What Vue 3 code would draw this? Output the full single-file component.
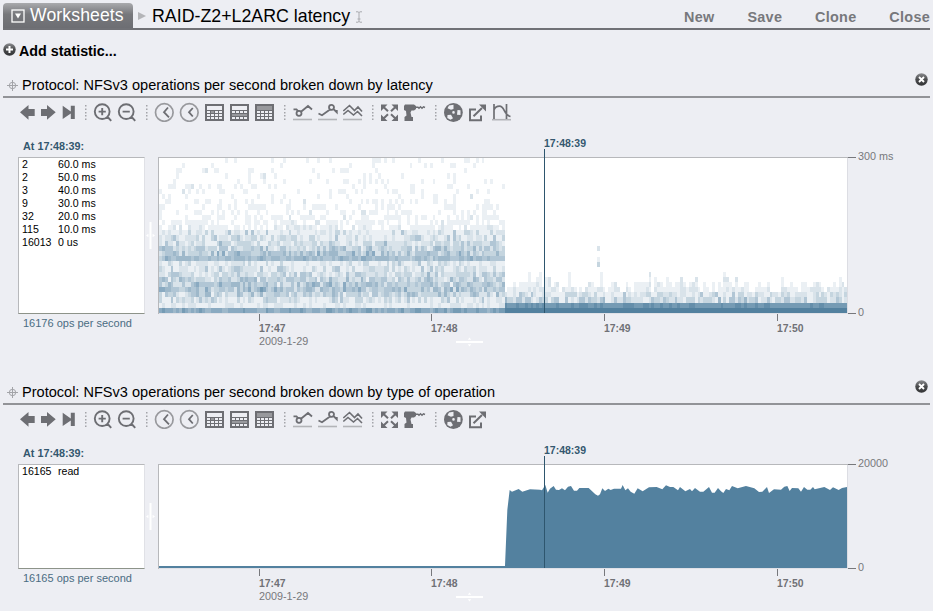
<template>
  <main class="analytics">
    <header class="topbar">
      <button class="worksheets">
        <svg width="14" height="14" viewBox="0 0 14 14">
          <rect x="1" y="1" width="12" height="12" fill="none" stroke="#fff" stroke-width="1.3" />
          <path d="M4 4.5H10L7 9.5Z" fill="#fff" />
        </svg>
        <span>Worksheets</span>
      </button>
      <svg class="crumb" width="8" height="8" viewBox="0 0 8 8">
        <path d="M0 0L8 4 0 8Z" fill="#b4b5b8" />
      </svg>
      <h1>RAID-Z2+L2ARC latency</h1>
      <svg class="caret" width="8" height="12" viewBox="0 0 8 12">
        <path d="M1 .8H3L4 1.6 5 .8H7M4 1.6V10.4M1 11.2H3L4 10.4 5 11.2H7M2.5 8H5.5" fill="none" stroke="#a9aaae" />
      </svg>
      <nav>
        <a v-for="item in menu" :key="item">{{ item }}</a>
      </nav>
    </header>

    <div class="add-row">
      <svg width="13" height="13" viewBox="0 0 13 13">
        <circle cx="6.5" cy="6.5" r="6.2" fill="url(#knob)" />
        <path d="M6.5 3V10M3 6.5H10" stroke="#fff" stroke-width="2" />
      </svg>
      <span>Add statistic...</span>
    </div>

    <section v-for="panel in panels" :key="panel.title" class="panel">
      <div class="panel-head">
        <svg class="move" width="11" height="11" viewBox="0 0 11 11" fill="none" stroke="#a3a4a8">
          <circle cx="5.5" cy="5.5" r="3.2" />
          <path d="M5.5 0V11M0 5.5H11" />
        </svg>
        <h2>{{ panel.title }}</h2>
        <svg class="close" width="13" height="13" viewBox="0 0 13 13">
          <circle cx="6.5" cy="6.5" r="6.2" fill="url(#knob)" />
          <path d="M4 4L9 9M9 4L4 9" stroke="#fff" stroke-width="1.9" />
        </svg>
      </div>

      <div class="toolbar">
        <svg
          v-for="tool in panel.tools"
          :key="tool.x"
          :width="tool.w"
          height="20"
          :viewBox="`${tool.x} 0 ${tool.w} 20`"
        >
          <path v-if="tool.fill" :d="tool.fill" fill="#6d6e73" />
          <path v-if="tool.base" :d="tool.base" fill="none" stroke="#b3b4b8" stroke-width="1.6" />
          <path v-if="tool.soft" :d="tool.soft" fill="none" stroke="#98999d" stroke-width="1.7" />
          <path v-if="tool.line" :d="tool.line" fill="none" stroke="#6d6e73" :stroke-width="tool.sw || 1.8" />
          <path v-if="tool.light" :d="tool.light" fill="#edeef3" />
          <path v-if="tool.dots" :d="tool.dots" fill="#a3a4a9" />
          <path v-if="tool.grey" :d="tool.grey" fill="#98999d" />
        </svg>
      </div>

      <div class="body">
        <aside>
          <h3>At 17:48:39:</h3>
          <ul :class="panel.kind">
            <li v-for="row in panel.rows" :key="row[1]">
              <span>{{ row[0] }}</span>
              <span>{{ row[1] }}</span>
            </li>
          </ul>
          <p>{{ panel.total }} ops per second</p>
        </aside>

        <div class="splitter" :class="panel.kind">
          <svg width="9" height="27" viewBox="0 0 9 27">
            <path d="M3.5 0H5.5V27H3.5ZM0 13.5L2.4 11.8V15.2ZM9 13.5L6.6 11.8V15.2Z" fill="#fff" />
          </svg>
        </div>

        <svg
          class="plot"
          width="775"
          :height="panel.h + 60"
          :viewBox="`158 -22 775 ${panel.h + 60}`"
        >
          <rect x="158" y="0" width="690" :height="panel.h" fill="#fff" />
          <g v-if="panel.kind === 'heat'" shape-rendering="crispEdges">
            <rect
              v-for="(c, i) in cells"
              :key="i"
              :x="c.x"
              :y="c.y"
              :width="c.w"
              :height="c.h"
              :fill="c.fill"
            />
          </g>
          <polygon v-else :points="area" transform="translate(158 0) scale(.33333)" fill="#53819f" />
          <g shape-rendering="crispEdges">
            <rect x="847" y="0" width="1" :height="panel.h" fill="#dcdde3" />
            <rect x="158" :y="panel.h - 1" width="690" height="1" fill="#e0e1e7" />
            <rect x="158" y="0" width="690" height="1" fill="#b7b8bb" />
            <rect x="158" y="0" width="1" :height="panel.h" fill="#b7b8bb" />
            <rect x="848" y="0" width="8" height="1" fill="#77787c" />
            <rect x="848" :y="panel.h - 1" width="8" height="1" fill="#77787c" />
            <rect v-for="t in ticks" :key="t.x" :x="t.x" :y="panel.h" width="1" height="7" fill="#77787c" />
            <rect x="544" y="-8" width="1" :height="panel.h + 7" fill="#2e566e" />
          </g>
          <text x="544" y="-10" class="marker">17:48:39</text>
          <text v-for="t in ticks" :key="t.label" :x="t.x" :y="panel.h + 18" class="tick">{{ t.label }}</text>
          <text x="259" :y="panel.h + 31" class="date">2009-1-29</text>
          <text x="858" y="3" class="axis">{{ panel.max }}</text>
          <text x="858" :y="panel.h + 2" class="axis">0</text>
          <g :transform="`translate(456 ${panel.h + 22})`" fill="#fff">
            <path d="M0 5H27V7H0ZM13.5 1.5L15.2 3.8H11.8ZM13.5 10.5L15.2 8.2H11.8Z" />
          </g>
        </svg>
      </div>
    </section>

    <svg class="defs" width="0" height="0">
      <defs>
        <linearGradient id="knob" x1="0" y1="0" x2="0" y2="1">
          <stop offset="0" stop-color="#8b8c8f" />
          <stop offset=".5" stop-color="#4a4b4d" />
          <stop offset="1" stop-color="#333436" />
        </linearGradient>
      </defs>
    </svg>
  </main>
</template>

<script setup>
const menu = ["New", "Save", "Clone", "Close"];

const ticks = [
  { x: 259, label: "17:47" },
  { x: 431, label: "17:48" },
  { x: 604, label: "17:49" },
  { x: 777, label: "17:50" },
];

const circle = (cx, cy, r) =>
  `M${cx - r} ${cy}a${r} ${r} 0 1 0 ${2 * r} 0a${r} ${r} 0 1 0 ${-2 * r} 0`;

const box = (x, y, w, h) => `M${x} ${y}h${w}v${h}h${-w}Z`;

const dots = (x, w) => ({
  x,
  w,
  dots: [3, 6.5, 10, 13, 16.5].map((y) => box(x + 1, y, 1.5, 1.5)).join(""),
});

// таблица: шапка + сетка 4x3
const table = (x, w, mode) => {
  let light = mode === "head" ? "" : box(x + 2, 4, 15, 4);
  let grey = mode === "head" ? box(x + 2, 4, 15, 4) : "";
  for (let r = 0; r < 3; r++) {
    for (let c = 0; c < 4; c++) {
      const cell = box(x + 2 + c * 4, 9 + r * 3, 3, 2);
      if (mode === "row" && r === 1) continue;
      if (mode === "cell" && r === 0 && c === 1) grey += cell;
      else light += cell;
    }
  }
  if (mode === "row") grey += box(x + 2, 12, 15, 2);
  return { x, w, fill: box(x, 2, 19, 17), light, grey };
};

const baseTools = [
  { x: 20, w: 21, fill: "M20 10.3L28.5 3V7H34.7V14H28.5V17.7Z" },
  { x: 41, w: 21, fill: "M41 7H47V3L55.7 10.3 47 17.7V14H41Z" },
  { x: 62, w: 22, fill: "M62.7 3.7L70.8 9.6V3.7H74.8V17H70.8V11.4L62.7 17Z" },
  dots(84, 9),
  { x: 93, w: 24, line: circle(102.2, 9.6, 7.4) + "M102.2 6V13.2M98.6 9.6H105.8M107.2 14.5L111.2 18.8", sw: 1.9 },
  { x: 117, w: 28, line: circle(126.2, 9.6, 7.4) + "M122.6 9.6H129.8M131.2 14.5L135.2 18.8", sw: 1.9 },
  dots(145, 9),
  { x: 154, w: 25, soft: circle(164.3, 10.5, 8.8), line: "M168 5.5L164 10.2 169 15.3" },
  { x: 179, w: 26, soft: circle(189.3, 10.5, 8.8), line: "M192.8 6L189 10.2 192.8 14.5" },
  table(205, 25, "cell"),
  table(230, 25, "row"),
  table(255, 28, "head"),
  dots(283, 10),
  { x: 293, w: 25, base: "M293 17.5H312", line: "M293.5 7.3H296.5L298 9" + circle(299, 11.3, 2.5) + "M301 9.8L308 4 312 7.5" },
  { x: 318, w: 25, base: "M318 17.5H337", line: "M318.5 11.5L322 13.2 330 7.5" + circle(331.5, 5.3, 2.5) + "M333.5 7L336.8 10.3V8" },
  { x: 343, w: 28, base: "M343 17.5H362", line: "M343.3 9L349.5 3.5 354.5 8.5 358 5 362 9.5M343.3 12.5L348 8.5 353.5 13 357.5 9.5 362 14", sw: 1.6 },
  dots(371, 10),
  {
    x: 381,
    w: 23,
    fill: "M381 2.5H387.5L381 9ZM398 2.5V9L391.5 2.5ZM381 19V12.5L387.5 19ZM398 19H391.5L398 12.5Z",
    line: "M383 4.5L388 9.3M396 4.5L391 9.3M383 17L388 12.2M396 17L391 12.2",
    sw: 2,
  },
  {
    x: 404,
    w: 30,
    fill: "M405 2.5H414L416 4V7L414 8.5H411.5L410.5 10.5 411.5 15H413V19H404.5V15L406.5 13.5 406 9 404 8V4Z",
    line: "M416 5.2H418L419 6.2 420.5 4.8 422 6.2 423.5 4.8 425 5.5",
    sw: 1.4,
  },
  dots(434, 10),
  {
    x: 444,
    w: 25,
    fill: circle(453.4, 10.5, 9.4),
    light:
      "M449 3.5L453.5 2.8V7L451 7.8 447.5 6.3ZM457.5 8L460.5 8.3V13L457 12.8ZM447.5 13L451 12.8 453 16.2 450.5 17.8 447.3 16Z" +
      circle(453.5, 10.4, 1.3),
  },
  {
    x: 469,
    w: 23,
    line: "M476 7.5H470V18.3H481V13.5M473.5 14.3L482 6",
    fill: "M479 2.5H486V9.5Z",
    sw: 2,
  },
];

const density = {
  x: 492,
  w: 20,
  base: "M492 17.7H511",
  line: "M494 2V17M494 8C495 5.5 497 4.2 499.5 4.2 505 4.2 503.5 13 510.5 14.5M506.5 2V17",
  sw: 1.7,
};

const panels = [
  {
    kind: "heat",
    title: "Protocol: NFSv3 operations per second broken down by latency",
    tools: [...baseTools, density],
    rows: [
      ["2", "60.0 ms"],
      ["2", "50.0 ms"],
      ["3", "40.0 ms"],
      ["9", "30.0 ms"],
      ["32", "20.0 ms"],
      ["115", "10.0 ms"],
      ["16013", "0 us"],
    ],
    total: 16176,
    max: "300 ms",
    h: 157,
  },
  {
    kind: "ops",
    title: "Protocol: NFSv3 operations per second broken down by type of operation",
    tools: baseTools,
    rows: [["16165", "read"]],
    total: 16165,
    max: "20000",
    h: 105,
  },
];

const palette = ["#ffffff", "#ebf0f4", "#d9e3ea", "#c5d5df", "#b1c6d5", "#9eb8ca", "#8aaac1", "#759bb4", "#648eaa", "#53819f"];

// средняя интенсивность по корзинам 10 мс, снизу вверх
const before = [
  6, 1.1, 1.8, 3.1, 4.1, 3.8, 2.9, 2.3, 1.9, 1.5, 4.7, 3.8, 3, 2.4, 1.8, 1.3, 0.8, 0.55, 0.42, 0.35,
  0.3, 0.33, 0.17, 0.2, 0.2, 0.15, 0.14, 0.15, 0.08, 0.14,
];
const after = [9, 7, 2.7, 1.7, 1.2, 1.1, 1, 1, 1];

let seed = 7129;
const rand = () => {
  seed = (seed * 1103515245 + 12345) % 2147483648;
  return seed / 2147483648;
};

const level = (mean, row, late) => {
  if (late && row === 0) return 9;
  if (late && row === 1) return rand() < 0.3 ? 8 : 7;
  if (mean < 0.6) return rand() < mean ? (rand() < 0.05 ? 2 : 1) : 0;
  const spread = row === 0 || row === 10 || mean < 1.3 ? 1.4 : 2.6;
  const v = Math.round(mean + (rand() + rand() - 1) * spread);
  return Math.max(row < 16 || late ? 1 : 0, Math.min(8, v));
};

// высота столбика после включения кэша
const reach = () => {
  const r = rand();
  if (r < 0.14) return 4;
  if (r < 0.48) return 5;
  if (r < 0.8) return 6;
  if (r < 0.94) return 7;
  return r < 0.985 ? 8 : 9;
};

const cells = [];
for (let col = 0; col < 239; col++) {
  const x = Math.round(159 + col * 2.88);
  const end = Math.min(847, Math.round(159 + (col + 1) * 2.88));
  const late = x >= 505;
  const rows = late ? after.slice(0, reach()) : before;
  rows.forEach((mean, row) => {
    const bottom = Math.round(156 - row * 5.17);
    const top = Math.round(156 - (row + 1) * 5.17);
    const v = level(mean, row, late);
    if (v > 0) cells.push({ x, y: top, w: end - x, h: bottom - top, fill: palette[v] });
  });
}
cells.push({ x: 597, y: 89, w: 3, h: 5, fill: palette[2] });
cells.push({ x: 597, y: 100, w: 3, h: 5, fill: palette[1] });
cells.push({ x: 597, y: 105, w: 3, h: 5, fill: palette[3] });

const area =
  "3,312 3,306 1041,306 1048,138 1055,78 1062,83 1082,75 1093,83 1116,76 1146,77 1152,79 1162,63 1169,86 " +
  "1176,74 1187,66 1194,77 1203,78 1212,73 1221,79 1230,68 1239,66 1248,80 1257,80 1264,72 1292,72 1312,91 " +
  "1320,95 1326,91 1333,73 1341,81 1351,74 1358,78 1368,74 1389,74 1394,63 1402,79 1410,73 1418,83 1429,89 " +
  "1439,73 1454,82 1473,70 1496,69 1513,76 1524,64 1536,69 1546,69 1560,79 1566,69 1582,82 1596,75 1602,82 " +
  "1611,72 1626,83 1636,83 1653,69 1662,86 1670,86 1680,72 1689,82 1696,87 1704,75 1714,79 1722,66 1739,73 " +
  "1764,66 1789,73 1803,84 1813,83 1827,69 1833,87 1848,76 1869,77 1879,68 1888,66 1895,81 1902,72 1921,73 " +
  "1929,83 1938,69 1948,77 1957,77 1965,69 1970,76 1999,69 2016,78 2025,70 2042,78 2052,72 2067,69 2067,312";
</script>

<style>
body {
  margin: 0;
  background: #edeef3;
  overflow: hidden;
}
</style>

<style scoped>
.analytics {
  width: 933px;
  height: 611px;
  overflow: hidden;
  background: #edeef3;
  font-family: "Liberation Sans", Arial, sans-serif;
  color: #000;
}

svg {
  display: block;
  flex: none;
}

h1,
h2,
h3,
p,
ul {
  margin: 0;
  padding: 0;
  font-weight: normal;
}

.topbar {
  display: flex;
  align-items: center;
  height: 28px;
  margin: 0 3px;
  border-bottom: 2px solid #707176;
}

.worksheets {
  display: flex;
  align-items: center;
  align-self: flex-end;
  gap: 5px;
  width: 130px;
  height: 25px;
  padding: 0 0 0 8px;
  border: none;
  border-radius: 4px 4px 0 0;
  background: linear-gradient(#a9aaad, #77787c 45%, #6d6e73);
  color: #fff;
  font-family: inherit;
  font-size: 17.6px;
  letter-spacing: 0.12px;
  white-space: nowrap;
}

.crumb {
  margin: 3px 6px 0 5px;
}

h1 {
  font-size: 17.8px;
  line-height: 20px;
  padding-top: 4px;
  white-space: nowrap;
}

.caret {
  margin: 5px 0 0 5px;
}

nav {
  display: flex;
  gap: 32.8px;
  margin-left: auto;
  padding-top: 6px;
  color: #77787c;
  font-size: 14.4px;
  font-weight: bold;
  letter-spacing: 0.3px;
}

.add-row {
  display: flex;
  align-items: center;
  gap: 3px;
  height: 38px;
  padding: 0 3px;
  font-size: 14.3px;
  font-weight: bold;
}

.add-row span {
  padding-top: 3px;
}

.panel {
  height: 307px;
}

.panel-head {
  display: flex;
  align-items: center;
  height: 28px;
  margin: 0 3px;
  padding: 0 2px 0 4px;
  border-bottom: 2px solid #929397;
}

.move {
  margin-top: 6px;
}

h2 {
  padding: 6px 0 0 4px;
  font-size: 14.55px;
  line-height: 18px;
  white-space: nowrap;
}

.close {
  margin: 0 0 5px auto;
}

.toolbar {
  display: flex;
  height: 20px;
  padding: 4px 0 0 20px;
}

.body {
  display: flex;
  margin-top: 13px;
  padding-left: 18px;
}

aside {
  width: 127px;
}

h3 {
  height: 22px;
  padding-left: 5px;
  box-sizing: border-box;
  color: #34586f;
  font-size: 10.8px;
  font-weight: bold;
  line-height: 22px;
}

ul {
  box-sizing: border-box;
  height: 157px;
  padding: 0 3px;
  background: #fff;
  border: 1px solid #b7b8bb;
  border-right-color: #e0e1e6;
  border-bottom-color: #8d9389;
  list-style: none;
}

ul.ops {
  height: 105px;
}

li {
  display: grid;
  grid-template-columns: 36px 1fr;
  font-size: 10.6px;
  line-height: 13px;
}

aside p {
  padding-left: 5px;
  color: #4a6c82;
  font-size: 11px;
  line-height: 19px;
}

.splitter {
  display: flex;
  align-items: center;
  justify-content: center;
  box-sizing: border-box;
  width: 13px;
  height: 179px;
  padding-top: 22px;
}

.splitter.ops {
  height: 127px;
}

.splitter svg {
  margin-right: 3px;
}

.marker {
  fill: #34586f;
  font-size: 10.5px;
  font-weight: bold;
}

.tick {
  fill: #707176;
  font-size: 10.4px;
  font-weight: bold;
}

.date,
.axis {
  fill: #77787c;
  font-size: 10.8px;
}
</style>
